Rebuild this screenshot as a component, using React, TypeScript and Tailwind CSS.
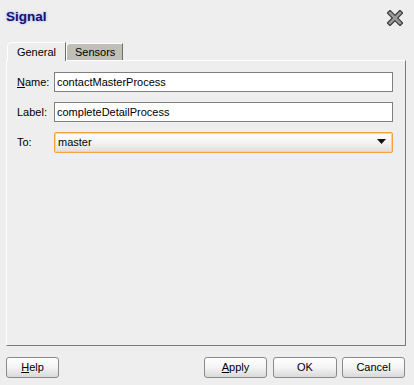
import React from 'react';

// Small helper: button with an underlined mnemonic letter
const DlgButton: React.FC<{ label: string; mnemonic?: number; className?: string }> = ({ label, mnemonic, className }) => (
  <button
    className={`h-[21px] rounded-[3px] border border-[#8a8a8a] bg-gradient-to-b from-white via-[#f4f4f4] to-[#d9d9d9] text-[11px] text-black leading-none ${className ?? ''}`}
  >
    {mnemonic === undefined ? (
      label
    ) : (
      <>
        {label.slice(0, mnemonic)}
        <span className="underline underline-offset-1">{label[mnemonic]}</span>
        {label.slice(mnemonic + 1)}
      </>
    )}
  </button>
);

const App: React.FC = () => {
  return (
    <div
      className="w-[414px] h-[385px] bg-[#eeeeee] flex flex-col overflow-hidden"
      style={{ fontFamily: '"Liberation Sans", Arial, sans-serif' }}
    >
      {/* Title bar */}
      <div className="h-[42px] flex items-start justify-between pl-[6px] pr-[11px] pt-[7px]">
        <span
          className="text-[13.5px] font-bold text-[#14146b]"
          style={{ textShadow: '0 0 2px #a9b4ff, 0 0 3px #c5ccff' }}
        >
          Signal
        </span>
        <svg width="16" height="16" viewBox="0 0 16 16" className="mt-[3px]">
          <path d="M3 3 L13 13 M13 3 L3 13" stroke="#3a3a3a" strokeWidth="5" strokeLinecap="square" />
          <path d="M3 3 L13 13 M13 3 L3 13" stroke="#9a9a9a" strokeWidth="2.6" strokeLinecap="square" />
        </svg>
      </div>

      {/* Tabs */}
      <div className="h-[18px] flex items-end pl-[7px] relative z-10">
        <div className="relative h-[19px] w-[59px] border-t border-l border-white border-r border-r-[#6f6f6f] bg-[#eeeeee] rounded-tl-[5px] flex items-center justify-center text-[11px] text-black -mb-px">
          General
        </div>
        <div className="h-[17px] w-[57px] border-t border-l border-white border-r border-r-[#6f6f6f] bg-[#bfbfb7] rounded-tl-[4px] flex items-center pl-[8px] text-[11px] text-black">
          Sensors
        </div>
      </div>

      {/* Tab panel */}
      <div className="mx-[6px] w-[400px] h-[286px] border-t border-l border-white border-r border-b border-r-[#7a7a7a] border-b-[#7a7a7a] pl-[10px] pr-[12px] pt-[11px] flex flex-col gap-[10px]">
        <div className="flex items-center h-[20px]">
          <span className="w-[37px] text-[11px] text-black">
            <span className="underline underline-offset-1">N</span>ame:
          </span>
          <div className="flex-1 h-[20px] border border-[#7f7f7f] bg-white flex items-center pl-[2px] text-[11px] text-black">
            contactMasterProcess
          </div>
        </div>
        <div className="flex items-center h-[20px]">
          <span className="w-[37px] text-[11px] text-black">Label:</span>
          <div className="flex-1 h-[20px] border border-[#7f7f7f] bg-white flex items-center pl-[2px] text-[11px] text-black">
            completeDetailProcess
          </div>
        </div>
        <div className="flex items-center h-[20px]">
          <span className="w-[37px] text-[11px] text-black">To:</span>
          <div className="flex-1 h-[21px] rounded-[2px] border border-[#f0a63a] shadow-[inset_0_0_0_1px_#fbd38f] bg-gradient-to-b from-white via-[#f3f3f3] to-[#dedede] flex items-center justify-between pl-[3px] pr-[6px] text-[11px] text-black">
            master
            <svg width="9" height="6" viewBox="0 0 9 6">
              <path d="M0 0 H9 L4.5 5 Z" fill="#111" />
            </svg>
          </div>
        </div>
      </div>

      {/* Button row */}
      <div className="flex items-center pl-[6px] pr-[9px] mt-[11px]">
        <DlgButton label="Help" mnemonic={0} className="w-[53px]" />
        <div className="flex-1" />
        <div className="flex">
          <DlgButton label="Apply" mnemonic={0} className="w-[63px]" />
          <DlgButton label="OK" className="w-[64px] ml-[6px]" />
          <DlgButton label="Cancel" className="w-[63px] ml-[5px]" />
        </div>
      </div>
    </div>
  );
};

export default App;
